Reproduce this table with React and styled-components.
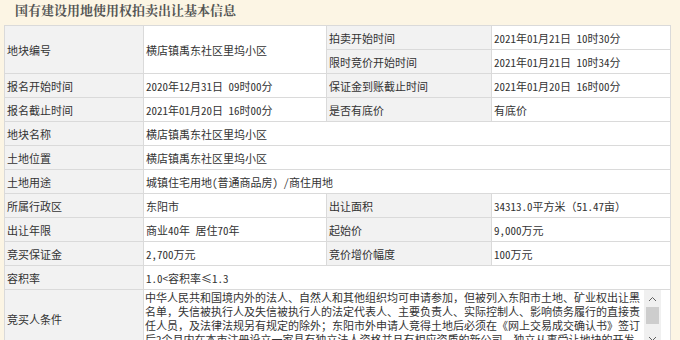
import React from "react";
import styled, { createGlobalStyle } from "styled-components";

const GlobalStyle = createGlobalStyle`
  html, body {
    margin: 0;
    padding: 0;
    overflow: hidden;
    background: #fcf5e4;
  }
  body {
    font-family: "Noto Sans Mono CJK SC", "Noto Sans CJK SC", "DejaVu Sans", sans-serif;
  }
`;

const Page = styled.div`
  width: 680px;
  height: 340px;
  box-sizing: border-box;
  padding: 0 10px 0 4px;
  overflow: hidden;
`;

const Title = styled.h2`
  margin: 0;
  height: 25px;
  padding-left: 11px;
  font: bold 13px/20px "Noto Serif CJK SC", "Noto Sans CJK SC", serif;
  color: #555;
  letter-spacing: 0;
`;

const Table = styled.table`
  border-collapse: collapse;
  table-layout: fixed;
  width: 666px;
  background: #fff;
  font-size: 11px;
  color: #333;
`;

const Cell = styled.td`
  height: 24px;
  box-sizing: border-box;
  padding: 0 2px;
  border: 1px solid #dadada;
  background: ${(p) => (p.$label ? "#f2f2f2" : "#fff")};
  white-space: nowrap;
  vertical-align: middle;
  overflow: hidden;
`;

const BoxCell = styled.td`
  padding: 0;
  border: 1px solid #dadada;
  background: #fff;
  vertical-align: top;
`;

const TextBox = styled.div`
  display: flex;
  width: 517px;
  height: 57px;
`;

const TextBody = styled.div`
  flex: 1;
  padding: 0 0 0 1px;
  overflow: hidden;
  line-height: 14px;
  font-size: 11px;
  color: #333;
`;

const Line = styled.div`
  white-space: nowrap;
`;

const ScrollBar = styled.div`
  flex: none;
  width: 17px;
  display: flex;
  flex-direction: column;
  background: #f0f0f0;
`;

const ArrowButton = styled.div`
  height: 17px;
  flex: none;
  display: flex;
  align-items: center;
  justify-content: center;
`;

const Track = styled.div`
  flex: 1;
  display: flex;
  flex-direction: column;
`;

const Thumb = styled.div`
  height: 17px;
  margin: 0 2px;
  background: #cdcdcd;
`;

const Chevron = ({ up }) => (
  <svg width="9" height="6" viewBox="0 0 9 6">
    <path
      d={up ? "M1 5 L4.5 1.5 L8 5" : "M1 1 L4.5 4.5 L8 1"}
      fill="none"
      stroke="#606060"
      strokeWidth="1"
    />
  </svg>
);

const pairs = [
  ["报名开始时间", "2020年12月31日 09时00分", "保证金到账截止时间", "2021年01月20日 16时00分"],
  ["报名截止时间", "2021年01月20日 16时00分", "是否有底价", "有底价"],
];

const wide = [
  ["地块名称", "横店镇禹东社区里坞小区"],
  ["土地位置", "横店镇禹东社区里坞小区"],
  ["土地用途", "城镇住宅用地(普通商品房) /商住用地"],
];

const pairs2 = [
  ["所属行政区", "东阳市", "出让面积", "34313.0平方米（51.47亩）"],
  ["出让年限", "商业40年 居住70年", "起始价", "9,000万元"],
  ["竞买保证金", "2,700万元", "竞价增价幅度", "100万元"],
];

const conditionLines = [
  "中华人民共和国境内外的法人、自然人和其他组织均可申请参加，但被列入东阳市土地、矿业权出让黑",
  "名单，失信被执行人及失信被执行人的法定代表人、主要负责人、实际控制人、影响债务履行的直接责",
  "任人员，及法律法规另有规定的除外；东阳市外申请人竞得土地后必须在《网上交易成交确认书》签订",
  "后2个月内在本市注册设立一家具有独立法人资格并且有相应资质的新公司，独立从事受让地块的开发",
  "建设。",
];

const PairRow = ({ row }) => (
  <tr>
    <Cell $label>{row[0]}</Cell>
    <Cell>{row[1]}</Cell>
    <Cell $label>{row[2]}</Cell>
    <Cell>{row[3]}</Cell>
  </tr>
);

const WideRow = ({ row }) => (
  <tr>
    <Cell $label>{row[0]}</Cell>
    <Cell colSpan={3}>{row[1]}</Cell>
  </tr>
);

export default function App() {
  return (
    <>
      <GlobalStyle />
      <Page>
        <Title>国有建设用地使用权拍卖出让基本信息</Title>
        <Table>
          <colgroup>
            <col style={{ width: 139 }} />
            <col style={{ width: 183 }} />
            <col style={{ width: 165 }} />
            <col style={{ width: 179 }} />
          </colgroup>
          <tbody>
            <tr>
              <Cell $label rowSpan={2}>地块编号</Cell>
              <Cell rowSpan={2}>横店镇禹东社区里坞小区</Cell>
              <Cell $label>拍卖开始时间</Cell>
              <Cell>2021年01月21日 10时30分</Cell>
            </tr>
            <tr>
              <Cell $label>限时竞价开始时间</Cell>
              <Cell>2021年01月21日 10时34分</Cell>
            </tr>
            {pairs.map((r) => (
              <PairRow key={r[0]} row={r} />
            ))}
            {wide.map((r) => (
              <WideRow key={r[0]} row={r} />
            ))}
            {pairs2.map((r) => (
              <PairRow key={r[0]} row={r} />
            ))}
            <WideRow row={["容积率", "1.0<容积率≤1.3"]} />
            <tr>
              <Cell $label>竞买人条件</Cell>
              <BoxCell colSpan={3}>
                <TextBox>
                  <TextBody>
                    {conditionLines.map((l, i) => (
                      <Line key={i}>{l}</Line>
                    ))}
                  </TextBody>
                  <ScrollBar>
                    <ArrowButton>
                      <Chevron up />
                    </ArrowButton>
                    <Track>
                      <Thumb />
                    </Track>
                    <ArrowButton>
                      <Chevron />
                    </ArrowButton>
                  </ScrollBar>
                </TextBox>
              </BoxCell>
            </tr>
          </tbody>
        </Table>
      </Page>
    </>
  );
}
